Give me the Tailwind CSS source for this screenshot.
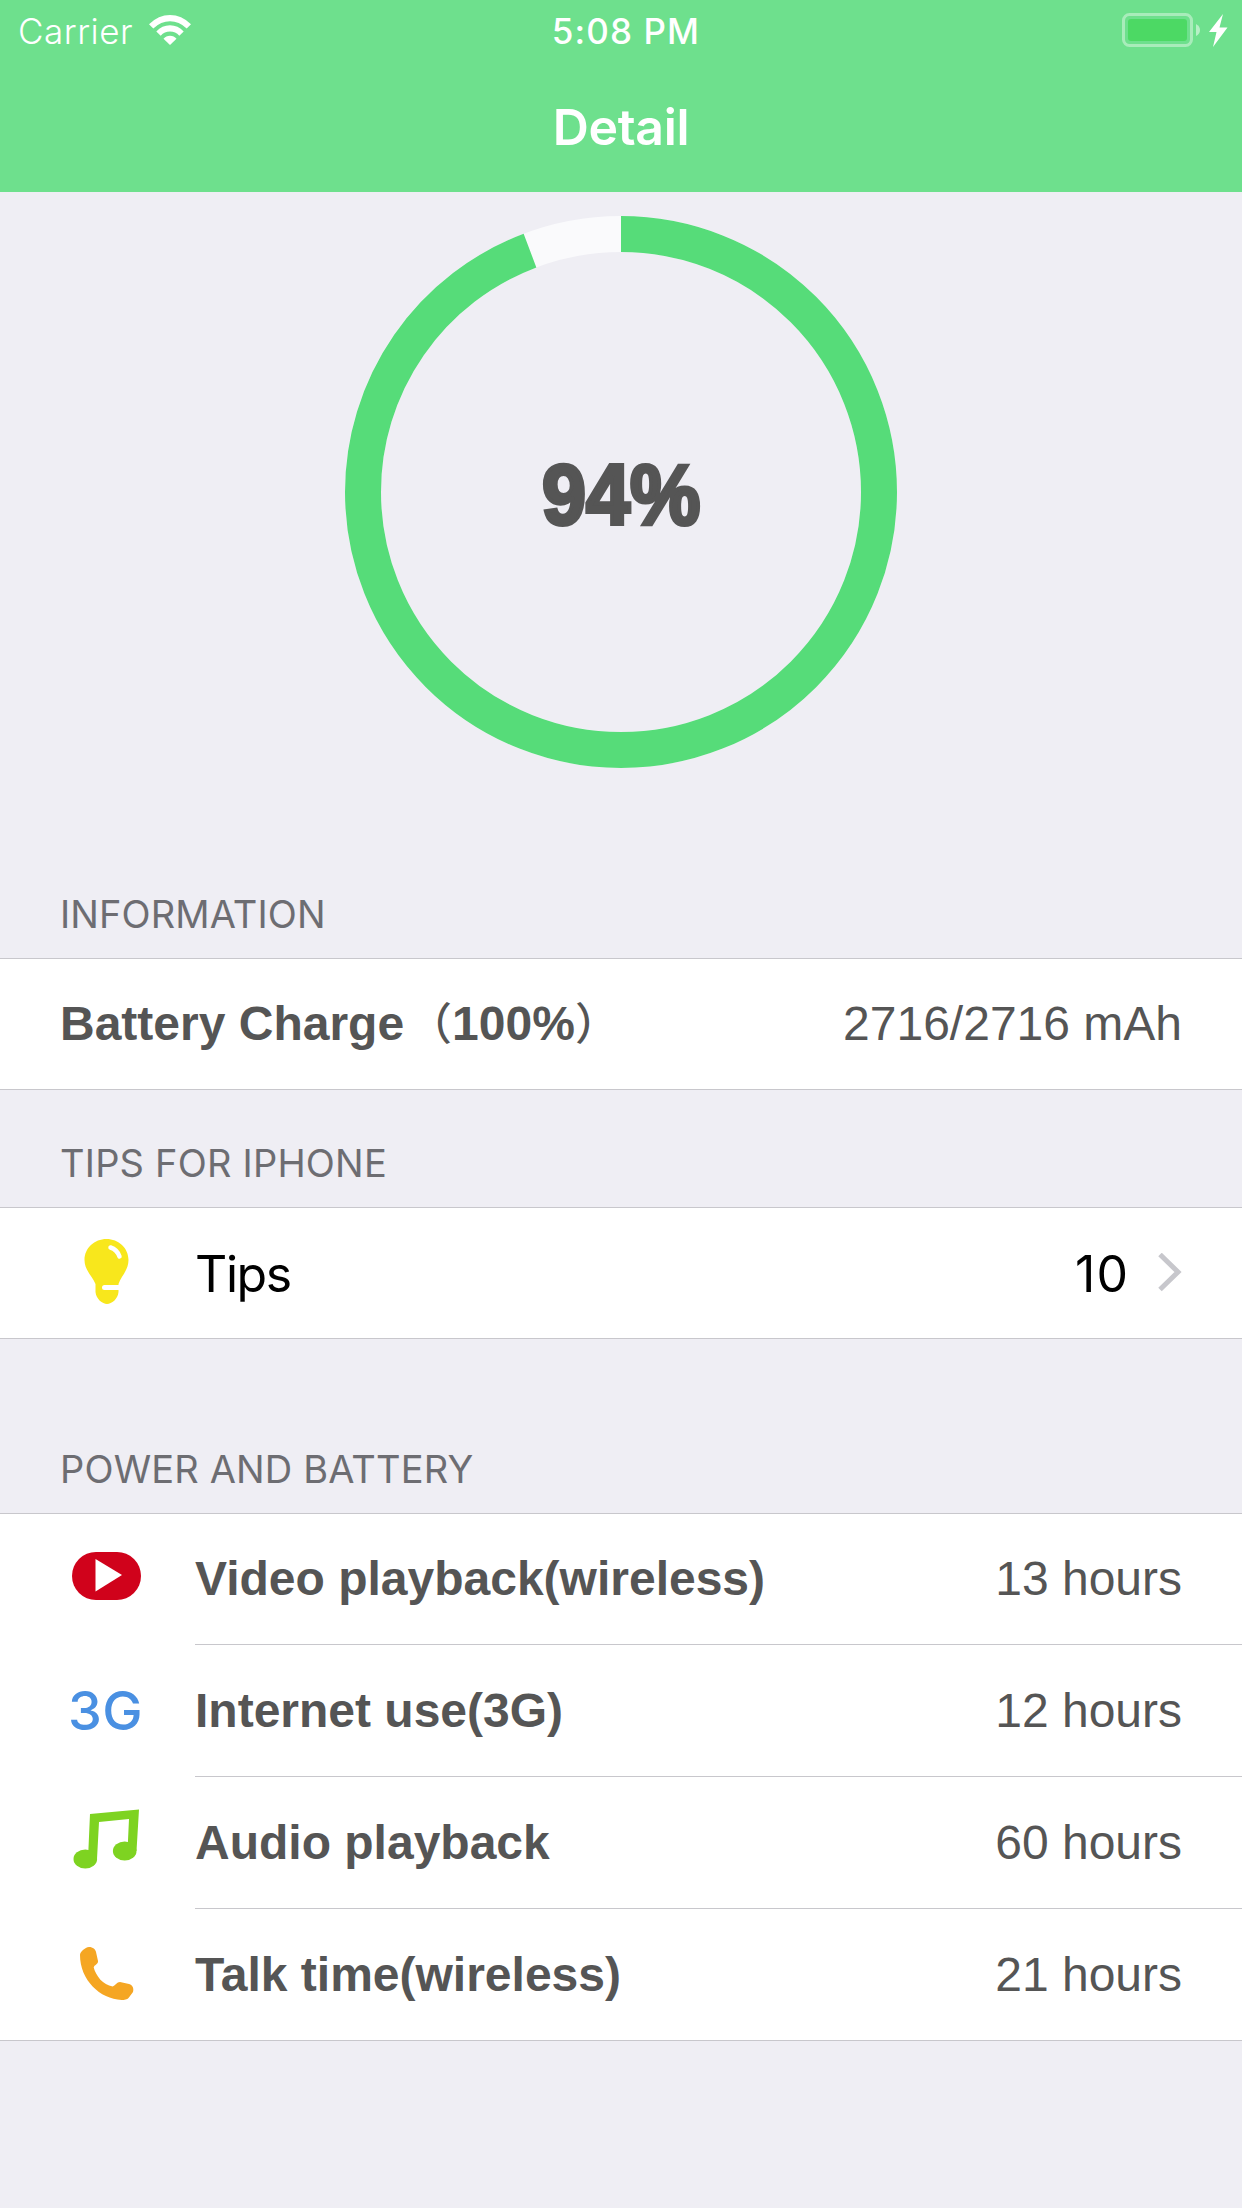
<!DOCTYPE html>
<html lang="en">
<head>
    <meta charset="UTF-8">
    <meta name="viewport" content="width=device-width, initial-scale=1.0">
    <title>Detail</title>
    <script src="https://cdn.jsdelivr.net/npm/@tailwindcss/browser@4"></script>
</head>
<body class="bg-[#efeef4] min-h-screen font-['Inter',sans-serif] text-[#555555]">
    <header class="h-[192px] bg-[#6ee08d] text-white">
        <!-- Status bar -->
        <div class="h-[60px] grid grid-cols-3 items-center pl-[18px] pr-[13px] text-[35px] leading-[58px]">
            <div class="flex items-center gap-[16px]">
                <span class="font-light tracking-[0.5px] pt-[2px]">Carrier</span>
                <svg class="w-[42px] h-[30px]" viewBox="0 0 42 30" fill="white">
                    <path d="M0 9.200Q9.500 0 21 0T42 9.200L37.700 13.400Q30 6.200 21 6.200T4.300 13.400Z"/>
                    <path d="M7.300 16.400Q13 10.200 21 10.200T34.700 16.400L30.300 20.700Q26.500 16.500 21 16.500T11.700 20.700Z"/>
                    <path d="M14.500 23.700Q17 20.700 21 20.700T27.500 23.700L21 30Z"/>
                </svg>
            </div>
            <span class="justify-self-center font-medium tracking-[1.1px] pt-[2px] pl-[5px]">5:08 PM</span>
            <svg class="justify-self-end w-[107px] h-[36px]" viewBox="0 0 107 36" fill="white">
                <rect x="1.500" y="2.500" width="68" height="31" rx="6" fill="none" stroke="white" stroke-opacity=".4" stroke-width="3"/>
                <rect x="6" y="7" width="59" height="22" rx="3" fill="#4cd964"/>
                <path d="M74 12Q78 14 78 18T74 24Z" fill-opacity=".5"/>
                <path d="M101 2L87 20H94.500L91 35L105.500 15.500H97.500Z"/>
            </svg>
        </div>
        <h1 class="text-center text-[50px] leading-[134px] font-semibold tracking-[-0.3px]">Detail</h1>
    </header>

    <main>
        <div class="pt-[24px] grid justify-center">
            <div class="relative size-[552px]">
                <svg class="size-full -rotate-90" viewBox="0 0 552 552" fill="none" stroke-width="36">
                    <circle cx="276" cy="276" r="258" stroke="#fafafc"/>
                    <circle cx="276" cy="276" r="258" stroke="#56dc79" pathLength="100" stroke-dasharray="94.260 100"/>
                </svg>
                <div class="absolute inset-0 flex items-center justify-center pt-[4px]">
                    <span class="font-['Liberation_Sans'] font-bold text-[86px] leading-none scale-x-[.92] [-webkit-text-stroke:4px_#555555]">94%</span>
                </div>
            </div>
        </div>

        <h2 class="h-[190px] pt-[123px] pl-[60px] text-[38px] leading-[46px] tracking-[0.1px] text-[#6d6d72]">INFORMATION</h2>
        <section class="h-[132px] bg-white border-y border-[#c8c7cc] flex items-center justify-between px-[60px] font-['Liberation_Sans'] text-[48px]">
            <span class="font-bold whitespace-nowrap">Battery Charge<span class="font-['Noto_Sans_CJK_SC',sans-serif] font-medium text-[44px] leading-none pl-[4px]">（</span>100%<span class="font-['Noto_Sans_CJK_SC',sans-serif] font-medium text-[44px] leading-none">）</span></span>
            <span>2716/2716 mAh</span>
        </section>

        <h2 class="h-[117px] pt-[50px] pl-[60px] text-[38px] leading-[46px] tracking-[0.2px] text-[#6d6d72]">TIPS FOR IPHONE</h2>
        <section class="h-[132px] bg-white border-y border-[#c8c7cc] flex items-center px-[60px] text-[50px] text-black">
            <svg class="w-[135px] h-[130px]" viewBox="0 0 135 130">
                <path d="M46.500 31C58.500 31 68.500 40 68.500 52C68.500 62 61 68.500 58.500 76V84C58 91 51.500 96 47 96S36 91 35.500 84V76C32.500 68.500 24.500 62 24.500 52C24.500 40 34.500 31 46.500 31Z" fill="#f8e71c"/>
                <path d="M50.500 39.500Q57 41.500 59.500 48.500" fill="none" stroke="white" stroke-width="4.500" stroke-linecap="round"/>
                <path d="M44.500 79.500H60" stroke="white" stroke-width="5" stroke-linecap="round"/>
            </svg>
            <span class="tracking-[-1.4px] pt-[2px]">Tips</span>
            <span class="ml-auto mr-[29px] pt-[2px] tracking-[1px]">10</span>
            <svg class="w-[24px] h-[40px]" viewBox="0 0 24 40"><path d="M2 1.500L20 19L2 36.500" fill="none" stroke="#c7c7cc" stroke-width="5"/></svg>
        </section>

        <h2 class="h-[174px] pt-[107px] pl-[60px] text-[38px] leading-[46px] tracking-[0.15px] text-[#6d6d72]">POWER AND BATTERY</h2>
        <section class="bg-white border-y border-[#c8c7cc] pl-[60px] font-['Liberation_Sans'] text-[48px]">
            <div class="flex h-[131px]">
                <svg class="w-[135px] h-[130px]" viewBox="0 0 135 130">
                    <rect x="12" y="38" width="69" height="48" rx="24" fill="#d0021b"/>
                    <path d="M35.500 45L62 61L35.500 77.500Z" fill="white"/>
                </svg>
                <div class="flex-1 flex items-center justify-between pr-[60px] border-b border-[#c8c7cc]">
                    <span class="font-bold">Video playback(wireless)</span>
                    <span>13 hours</span>
                </div>
            </div>
            <div class="flex h-[132px]">
                <div class="w-[135px] pl-[8px] font-['Inter'] font-medium text-[54px] leading-[131px] tracking-[0.3px] text-[#4a90e2]">3G</div>
                <div class="flex-1 flex items-center justify-between pr-[60px] border-b border-[#c8c7cc]">
                    <span class="font-bold">Internet use(3G)</span>
                    <span>12 hours</span>
                </div>
            </div>
            <div class="flex h-[132px]">
                <svg class="w-[135px] h-[131px]" viewBox="0 0 135 131" fill="#7ed321">
                    <path d="M30 37L79 32.500L76.500 74H67.500L69 42L39 45L37 82H28Z"/>
                    <ellipse cx="25.300" cy="82" rx="11.800" ry="9.600"/>
                    <ellipse cx="64.700" cy="74" rx="11.800" ry="9.600"/>
                </svg>
                <div class="flex-1 flex items-center justify-between pr-[60px] border-b border-[#c8c7cc]">
                    <span class="font-bold">Audio playback</span>
                    <span>60 hours</span>
                </div>
            </div>
            <div class="flex h-[131px]">
                <svg class="w-[135px] h-[131px]" viewBox="0 0 135 131" fill="#f5a623">
                    <path d="M20 46C20 43 25 38.500 29 38C33 38 35.500 40.500 36 43L38 52C38.500 55 34 56 33.700 58.500C36 67 43 76 52.700 77.500C55 76.500 57 73 60 73L69 75C73 76 74 80 73 83L68.500 89C67.500 90.500 64 91 61.700 91C40 90 20 71 20 46Z"/>
                </svg>
                <div class="flex-1 flex items-center justify-between pr-[60px]">
                    <span class="font-bold">Talk time(wireless)</span>
                    <span>21 hours</span>
                </div>
            </div>
        </section>
    </main>
</body>
</html>
